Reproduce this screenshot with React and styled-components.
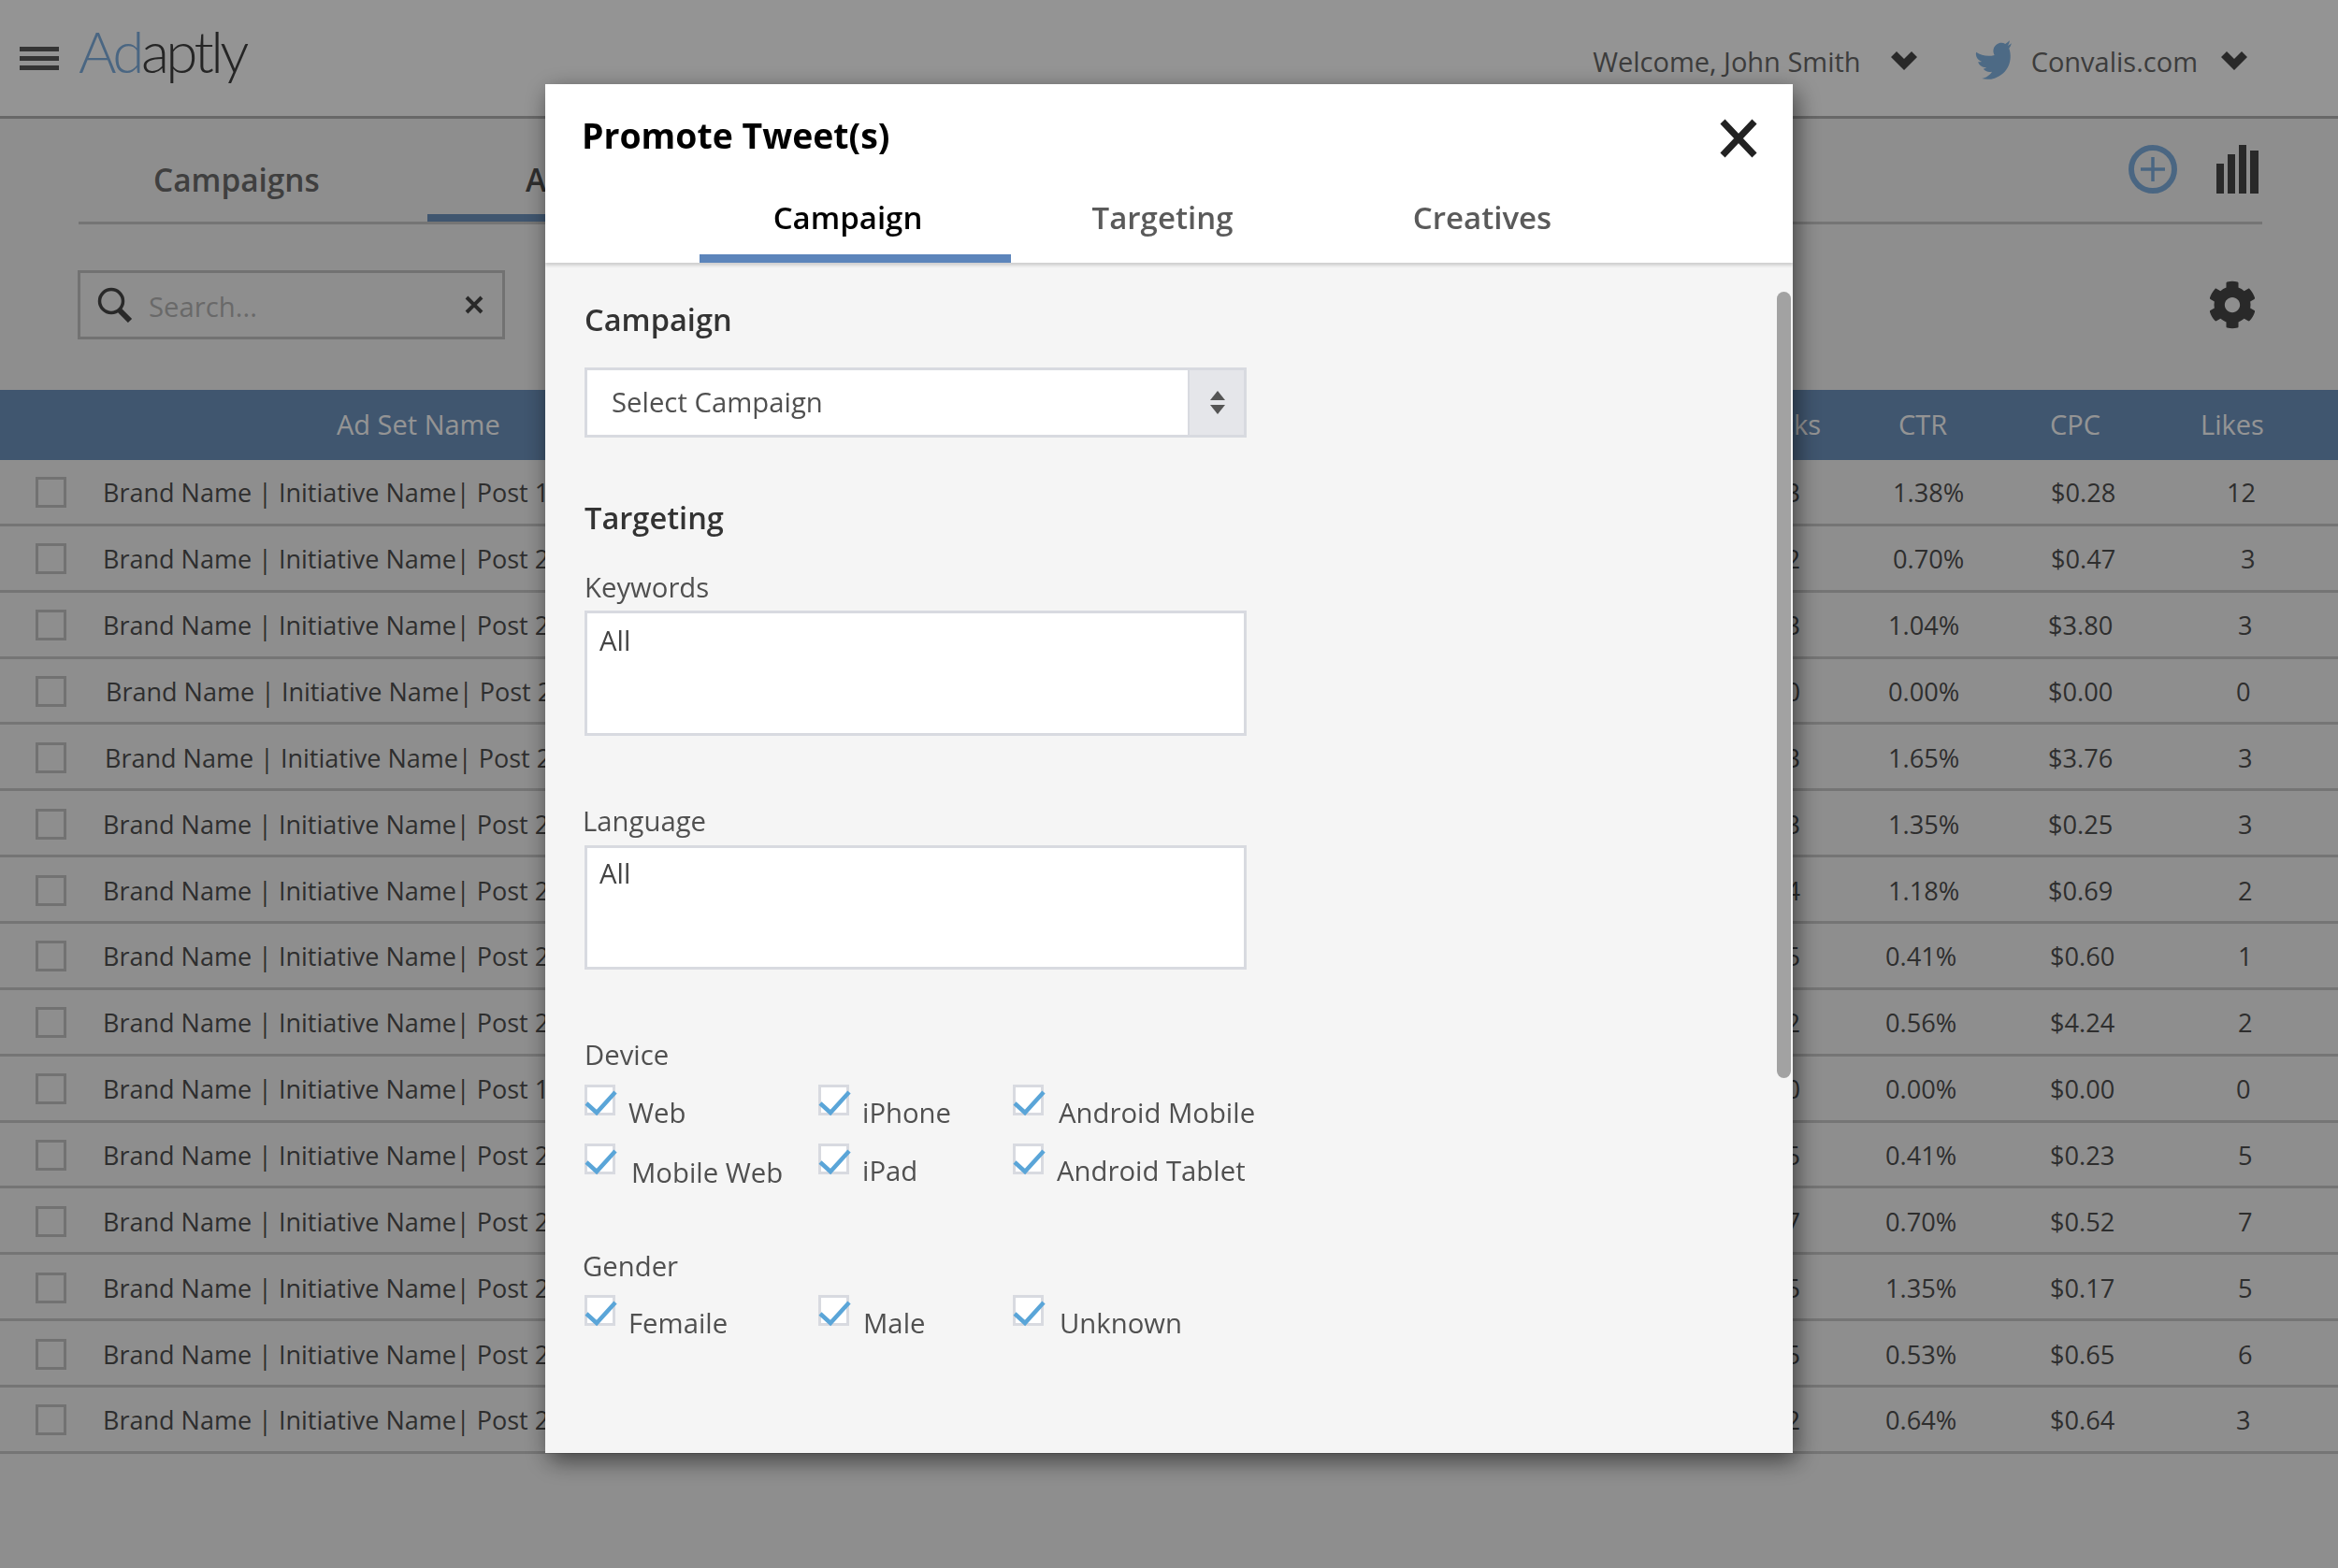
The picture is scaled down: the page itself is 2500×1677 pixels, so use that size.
// React
import React from 'react';
// Styled components
import styled, { createGlobalStyle } from 'styled-components';
// Icons
import { FaTwitter, FaCog } from 'react-icons/fa';

const GlobalStyle = createGlobalStyle`
  html, body {
    margin: 0;
    padding: 0;
    background: #f5f5f5;
    font-family: "Open Sans", "Liberation Sans", sans-serif;
  }
  * {
    box-sizing: border-box;
  }
`;

const Page = styled.div`
  width: 2500px;
  height: 1677px;
  overflow: hidden;
  background: #f5f5f5;
`;

// Top bar
const TopBar = styled.header`
  display: flex;
  align-items: center;
  height: 127px;
  padding: 0 97px 0 21px;
  background: #ffffff;
  border-bottom: 3px solid #b4b4b4;
`;

const Burger = styled.div`
  display: flex;
  flex-direction: column;
  gap: 5px;
  width: 42px;
  margin-right: 21px;
`;

const BurgerBar = styled.span`
  height: 5px;
  background: #5a5a5a;
`;

const Logo = styled.div`
  font-family: "Lato", sans-serif;
  font-weight: 300;
  font-size: 62px;
  line-height: 70px;
  letter-spacing: -3.6px;
  color: #404040;
  margin-top: -16px;
`;

const LogoAd = styled.span`
  color: #80b0e0;
`;

const UserMenu = styled.div`
  display: flex;
  align-items: center;
  margin-left: auto;
  padding-top: 6px;
  font-size: 29px;
  color: #686868;
`;

const MenuChevron = styled.svg`
  width: 28px;
  height: 20px;
  margin-left: ${(p) => p.$gap}px;
  margin-right: ${(p) => p.$after}px;
`;

const Bird = styled(FaTwitter)`
  width: 42px;
  height: 42px;
  color: #85b7e5;
  margin-right: 16px;
  transform: rotate(-18deg);
`;

// Page tabs
const PageTabs = styled.nav`
  display: flex;
  height: 113px;
  margin: 0 81px 0 84px;
  border-bottom: 3px solid #cacaca;
`;

const PageTab = styled.div`
  width: ${(p) => p.$width}px;
  padding: 42px 0 0 ${(p) => p.$pad}px;
  font-size: 33.4px;
  font-weight: 600;
  line-height: 46px;
  color: ${(p) => (p.$active ? '#505050' : '#6d6d6d')};
  box-shadow: ${(p) => (p.$active ? 'inset 0 -8px 0 #6e94bf' : 'none')};
`;

const PageActions = styled.div`
  display: flex;
  gap: 42px;
  margin-left: auto;
  padding: 28px 4px 0 0;
`;

// Toolbar
const Toolbar = styled.div`
  display: flex;
  align-items: flex-start;
  height: 177px;
  padding: 49px 87px 0 83px;
`;

const SearchBox = styled.div`
  display: flex;
  align-items: center;
  width: 457px;
  height: 74px;
  padding: 0 20px 0 18px;
  border: 3px solid #c4c4c4;
  font-size: 29.3px;
  color: #b5b5b5;
`;

const SearchLabel = styled.span`
  margin-left: 17px;
  padding-top: 4px;
  flex: 1;
`;

const Gear = styled(FaCog)`
  width: 52px;
  height: 52px;
  margin: 11px 0 0 auto;
  color: #484848;
`;

// Table
const tableColumns = '110px 1780px 126px 174px 201px 109px';

const TableHead = styled.div`
  display: grid;
  grid-template-columns: ${tableColumns};
  align-items: center;
  height: 75px;
  padding-bottom: 2px;
  background: #6e94bf;
  color: #ffffff;
  font-size: 29px;
`;

const HeadCell = styled.div`
  margin-left: ${(p) => p.$dx || 0}px;
  white-space: nowrap;
`;

const HeadClicks = styled.div`
  display: flex;
  justify-content: flex-end;
  white-space: nowrap;
  margin-right: 69px;
`;

const Row = styled.div`
  display: grid;
  grid-template-columns: ${tableColumns};
  align-items: center;
  height: 70.87px;
  padding-top: 2px;
  border-bottom: 3px solid #cacaca;
  font-size: 27.2px;
  color: #505050;
`;

const RowCheck = styled.div`
  width: 33px;
  height: 33px;
  margin-left: 38px;
  border: 3px solid #c4c4c4;
`;

const Cell = styled.div`
  margin-left: ${(p) => p.$dx || 0}px;
  white-space: nowrap;
`;

const NameCell = styled(Cell)`
  font-size: 27px;
`;

const ClicksCell = styled.div`
  padding-right: 91px;
  text-align: right;
`;

// Modal
const Overlay = styled.div`
  position: fixed;
  inset: 0;
  background: rgba(0, 0, 0, 0.42);
`;

const Modal = styled.section`
  position: fixed;
  left: 583px;
  top: 90px;
  width: 1334px;
  height: 1464px;
  background: #f5f5f5;
  box-shadow: 4px 8px 24px rgba(0, 0, 0, 0.55);
  overflow: hidden;
`;

const ModalHead = styled.div`
  position: relative;
  height: 191px;
  padding-top: 30px;
  background: #ffffff;
  box-shadow: 0 3px 3px #cfcfcf;
`;

const ModalTitle = styled.h2`
  margin: 0 0 0 39px;
  font-size: 37.4px;
  font-weight: 700;
  line-height: 50px;
  color: #000000;
`;

const CloseButton = styled.svg`
  position: absolute;
  top: 37px;
  right: 37px;
  width: 42px;
  height: 42px;
`;

const ModalTabs = styled.div`
  display: flex;
  height: 111px;
  padding-left: 165px;
`;

const ModalTab = styled.div`
  width: ${(p) => p.$width}px;
  height: 111px;
  padding: 42px ${(p) => p.$right || 0}px 0 0;
  font-size: 33px;
  font-weight: 600;
  line-height: 42px;
  text-align: center;
  color: ${(p) => (p.$active ? '#000000' : '#5a5a5a')};
  border-bottom: ${(p) => (p.$active ? '9px solid #5c85bb' : 'none')};
`;

const ModalBody = styled.div`
  position: relative;
  padding: 39px 0 0 42px;
`;

const Scrollbar = styled.div`
  position: absolute;
  top: 31px;
  right: 2px;
  width: 15px;
  height: 841px;
  border-radius: 8px;
  background: #a2a2a2;
`;

const SectionTitle = styled.h3`
  margin: ${(p) => p.$top}px 0 0;
  font-size: 32.6px;
  font-weight: 600;
  line-height: 44px;
  color: #333333;
`;

const SelectBox = styled.div`
  display: flex;
  width: 708px;
  height: 75px;
  margin-top: 29px;
  background: #ffffff;
  border: 3px solid #d8dae0;
`;

const SelectText = styled.div`
  flex: 1;
  padding-left: 26px;
  font-size: 29.3px;
  line-height: 68px;
  color: #505050;
`;

const SelectArrows = styled.div`
  display: flex;
  flex-direction: column;
  align-items: center;
  justify-content: center;
  gap: 5px;
  width: 60px;
  padding-left: 2px;
  background: #e5e6ea;
  border-left: 2px solid #d8dae0;
`;

const Arrow = styled.span`
  width: 0;
  height: 0;
  border-left: 8px solid transparent;
  border-right: 8px solid transparent;
  border-bottom: ${(p) => (p.$up ? '10px solid #555555' : '0')};
  border-top: ${(p) => (p.$up ? '0' : '10px solid #555555')};
`;

const FieldLabel = styled.div`
  margin: ${(p) => p.$top}px 0 0 ${(p) => p.$left || 0}px;
  font-size: 29.3px;
  line-height: 36px;
  color: #505050;
`;

const TextBox = styled.div`
  width: 708px;
  height: ${(p) => p.$height}px;
  margin-top: ${(p) => p.$top}px;
  padding: ${(p) => p.$pad}px 13px;
  background: #ffffff;
  border: 3px solid #d8dae0;
  font-size: 29.3px;
  line-height: 40px;
  color: #444444;
`;

const CheckGrid = styled.div`
  display: grid;
  grid-template-columns: 250px 208px auto;
  grid-auto-rows: 63px;
  margin-top: ${(p) => p.$top}px;
`;

const CheckItem = styled.div`
  display: flex;
  align-items: flex-start;
  font-size: 29.3px;
  line-height: 36px;
  color: #505050;
`;

const CheckBox = styled.span`
  position: relative;
  flex: none;
  width: 33px;
  height: 33px;
  background: #ffffff;
  border: 3px solid #d8dae0;
`;

const CheckMark = styled.svg`
  position: absolute;
  left: -3px;
  top: -3px;
  width: 36px;
  height: 33px;
  overflow: visible;
`;

const CheckLabel = styled.span`
  margin: ${(p) => 12 + (p.$dy || 0)}px 0 0 ${(p) => p.$gap}px;
  white-space: nowrap;
`;

const rows = [
  ['1', '3', '1.38%', 8, '$0.28', 3, '12', -10, 0],
  ['2', '2', '0.70%', 8, '$0.47', 3, '3', 5, 0],
  ['2', '3', '1.04%', 3, '$3.80', 0, '3', 2, 0],
  ['2', '0', '0.00%', 3, '$0.00', 0, '0', 0, 3],
  ['2', '3', '1.65%', 3, '$3.76', 0, '3', 2, 2],
  ['2', '3', '1.35%', 3, '$0.25', 0, '3', 2, 0],
  ['2', '4', '1.18%', 3, '$0.69', 0, '2', 2, 0],
  ['2', '5', '0.41%', 0, '$0.60', 2, '1', 2, 0],
  ['2', '2', '0.56%', 0, '$4.24', 2, '2', 2, 0],
  ['1', '0', '0.00%', 0, '$0.00', 2, '0', 0, 0],
  ['2', '5', '0.41%', 0, '$0.23', 2, '5', 2, 0],
  ['2', '7', '0.70%', 0, '$0.52', 2, '7', 2, 0],
  ['2', '5', '1.35%', 0, '$0.17', 2, '5', 2, 0],
  ['2', '5', '0.53%', 0, '$0.65', 2, '6', 2, 0],
  ['2', '2', '0.64%', 0, '$0.64', 2, '3', 0, 0],
];

const devices = [
  ['Web', 14, 0],
  ['iPhone', 14, 0],
  ['Android Mobile', 16, 0],
  ['Mobile Web', 17, 1],
  ['iPad', 14, -1],
  ['Android Tablet', 14, -1],
];

const genders = [
  ['Femaile', 14],
  ['Male', 15],
  ['Unknown', 17],
];

const Check = ({ label, gap, dy }) => (
  <CheckItem>
    <CheckBox>
      <CheckMark viewBox="0 0 36 33">
        <path d="M2 20 L13 30 L33 8" fill="none" stroke="#5aa5d8" strokeWidth="4.5" />
      </CheckMark>
    </CheckBox>
    <CheckLabel $gap={gap} $dy={dy}>
      {label}
    </CheckLabel>
  </CheckItem>
);

const Chevron = ({ gap, after }) => (
  <MenuChevron $gap={gap} $after={after} viewBox="0 0 28 20">
    <path d="M0 6L6 0L14 8L22 0L28 6L14 20Z" fill="#484848" />
  </MenuChevron>
);

const App = () => (
  <Page>
    <GlobalStyle />
    <TopBar>
      <Burger>
        <BurgerBar />
        <BurgerBar />
        <BurgerBar />
      </Burger>
      <Logo>
        <LogoAd>Ad</LogoAd>aptly
      </Logo>
      <UserMenu>
        Welcome, John Smith
        <Chevron gap={32} after={64} />
        <Bird />
        Convalis.com
        <Chevron gap={25} after={0} />
      </UserMenu>
    </TopBar>

    <PageTabs>
      <PageTab $width={373} $pad={80}>
        Campaigns
      </PageTab>
      <PageTab $width={400} $pad={105} $active>
        Ad Sets
      </PageTab>
      <PageActions>
        <svg width="52" height="52" viewBox="0 0 52 52">
          <circle cx="26" cy="26" r="23" fill="none" stroke="#80b0e0" strokeWidth="6" />
          <path d="M26 13V39M13 26H39" stroke="#80b0e0" strokeWidth="3.5" />
        </svg>
        <svg width="45" height="52" viewBox="0 0 45 52">
          <rect x="0" y="20" width="8" height="32" fill="#484848" />
          <rect x="12" y="10" width="8" height="42" fill="#484848" />
          <rect x="24" y="0" width="8" height="52" fill="#484848" />
          <rect x="36" y="6" width="9" height="46" fill="#484848" />
        </svg>
      </PageActions>
    </PageTabs>

    <Toolbar>
      <SearchBox>
        <svg width="38" height="38" viewBox="0 0 38 38">
          <circle cx="15" cy="15" r="12.5" fill="none" stroke="#484848" strokeWidth="3.5" />
          <path d="M23 24L35 36" stroke="#484848" strokeWidth="6" />
        </svg>
        <SearchLabel>Search...</SearchLabel>
        <svg width="20" height="20" viewBox="0 0 20 20">
          <path d="M2 2L18 18M18 2L2 18" stroke="#484848" strokeWidth="4" />
        </svg>
      </SearchBox>
      <Gear />
    </Toolbar>

    <TableHead>
      <span />
      <HeadCell $dx={250}>Ad Set Name</HeadCell>
      <HeadClicks>Clicks</HeadClicks>
      <HeadCell $dx={14}>CTR</HeadCell>
      <HeadCell $dx={2}>CPC</HeadCell>
      <HeadCell $dx={-38}>Likes</HeadCell>
    </TableHead>
    {rows.map(([post, clicks, ctr, ctrDx, cpc, cpcDx, likes, likesDx, nameDx], i) => (
      <Row key={i}>
        <RowCheck />
        <NameCell $dx={nameDx}>Brand Name | Initiative Name| Post {post}</NameCell>
        <ClicksCell>{clicks}</ClicksCell>
        <Cell $dx={ctrDx}>{ctr}</Cell>
        <Cell $dx={cpcDx}>{cpc}</Cell>
        <Cell $dx={likesDx}>{likes}</Cell>
      </Row>
    ))}

    <Overlay />

    <Modal>
      <ModalHead>
        <ModalTitle>Promote Tweet(s)</ModalTitle>
        <CloseButton viewBox="0 0 42 42">
          <path d="M4 3L38 39M38 3L4 39" stroke="#222222" strokeWidth="7" />
        </CloseButton>
        <ModalTabs>
          <ModalTab $width={333} $right={16} $active>
            Campaign
          </ModalTab>
          <ModalTab $width={324}>Targeting</ModalTab>
          <ModalTab $width={360}>Creatives</ModalTab>
        </ModalTabs>
      </ModalHead>
      <ModalBody>
        <Scrollbar />
        <SectionTitle $top={0}>Campaign</SectionTitle>
        <SelectBox>
          <SelectText>Select Campaign</SelectText>
          <SelectArrows>
            <Arrow $up />
            <Arrow />
          </SelectArrows>
        </SelectBox>

        <SectionTitle $top={64}>Targeting</SectionTitle>
        <FieldLabel $top={34}>Keywords</FieldLabel>
        <TextBox $top={7} $height={134} $pad={9}>
          All
        </TextBox>
        <FieldLabel $top={73} $left={-2}>
          Language
        </FieldLabel>
        <TextBox $top={8} $height={133} $pad={7}>
          All
        </TextBox>

        <FieldLabel $top={73}>Device</FieldLabel>
        <CheckGrid $top={14}>
          {devices.map(([label, gap, dy]) => (
            <Check key={label} label={label} gap={gap} dy={dy} />
          ))}
        </CheckGrid>

        <FieldLabel $top={50} $left={-2}>
          Gender
        </FieldLabel>
        <CheckGrid $top={13}>
          {genders.map(([label, gap]) => (
            <Check key={label} label={label} gap={gap} />
          ))}
        </CheckGrid>
      </ModalBody>
    </Modal>
  </Page>
);

export default App;
